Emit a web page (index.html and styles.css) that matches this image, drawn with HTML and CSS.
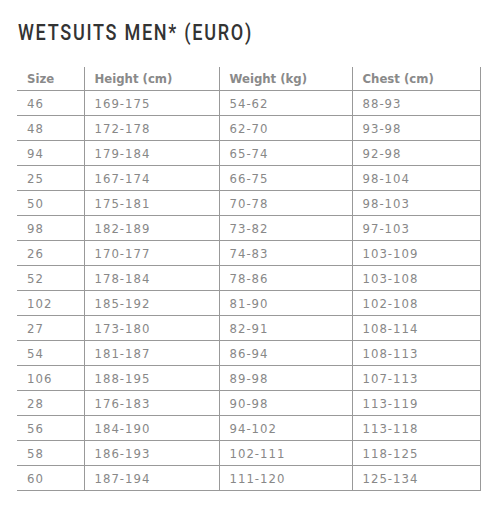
FILE: index.html
```html
<!DOCTYPE html>
<html>
<head>
<meta charset="utf-8">
<link rel="stylesheet" href="styles.css">
</head>
<body>
<h1 class="title">WETSUITS MEN* (EURO)</h1>
<table class="sizes">
<colgroup><col class="c1"><col class="c2"><col class="c3"><col class="c4"></colgroup>
<thead>
<tr><th>Size</th><th>Height (cm)</th><th>Weight (kg)</th><th>Chest (cm)</th></tr>
</thead>
<tbody>
<tr><td>46</td><td>169-175</td><td>54-62</td><td>88-93</td></tr>
<tr><td>48</td><td>172-178</td><td>62-70</td><td>93-98</td></tr>
<tr><td>94</td><td>179-184</td><td>65-74</td><td>92-98</td></tr>
<tr><td>25</td><td>167-174</td><td>66-75</td><td>98-104</td></tr>
<tr><td>50</td><td>175-181</td><td>70-78</td><td>98-103</td></tr>
<tr><td>98</td><td>182-189</td><td>73-82</td><td>97-103</td></tr>
<tr><td>26</td><td>170-177</td><td>74-83</td><td>103-109</td></tr>
<tr><td>52</td><td>178-184</td><td>78-86</td><td>103-108</td></tr>
<tr><td>102</td><td>185-192</td><td>81-90</td><td>102-108</td></tr>
<tr><td>27</td><td>173-180</td><td>82-91</td><td>108-114</td></tr>
<tr><td>54</td><td>181-187</td><td>86-94</td><td>108-113</td></tr>
<tr><td>106</td><td>188-195</td><td>89-98</td><td>107-113</td></tr>
<tr><td>28</td><td>176-183</td><td>90-98</td><td>113-119</td></tr>
<tr><td>56</td><td>184-190</td><td>94-102</td><td>113-118</td></tr>
<tr><td>58</td><td>186-193</td><td>102-111</td><td>118-125</td></tr>
<tr><td>60</td><td>187-194</td><td>111-120</td><td>125-134</td></tr>
</tbody>
</table>
</body>
</html>
```
FILE: styles.css
```css
html, body {
  margin: 0;
  padding: 0;
  background: #fff;
}
body {
  padding: 20px 0 0 17px;
  font-family: "DejaVu Sans Condensed", "Liberation Sans", sans-serif;
}
.title {
  margin: 0 0 0 1px;
  font-family: Roboto, "Liberation Sans", sans-serif;
  font-size: 22px;
  line-height: 26px;
  font-weight: 500;
  color: #333;
  letter-spacing: 2.1px;
  white-space: nowrap;
  transform: scaleX(0.82);
  transform-origin: 0 0;
}
.sizes {
  margin-top: 21px;
  border-collapse: collapse;
  table-layout: fixed;
  width: 463px;
  color: #888;
  font-size: 13px;
}
.c1 { width: 67px; }
.c2 { width: 135px; }
.c3 { width: 133px; }
.c4 { width: 128px; }
.sizes th, .sizes td {
  border-right: 1px solid #999;
  border-bottom: 1px solid #999;
  padding: 0 0 0 10px;
  text-align: left;
  white-space: nowrap;
}
.sizes th {
  height: 23px;
  font-weight: bold;
  color: #8a8a8a;
}
.sizes td {
  height: 24px;
  letter-spacing: 1px;
}
```
